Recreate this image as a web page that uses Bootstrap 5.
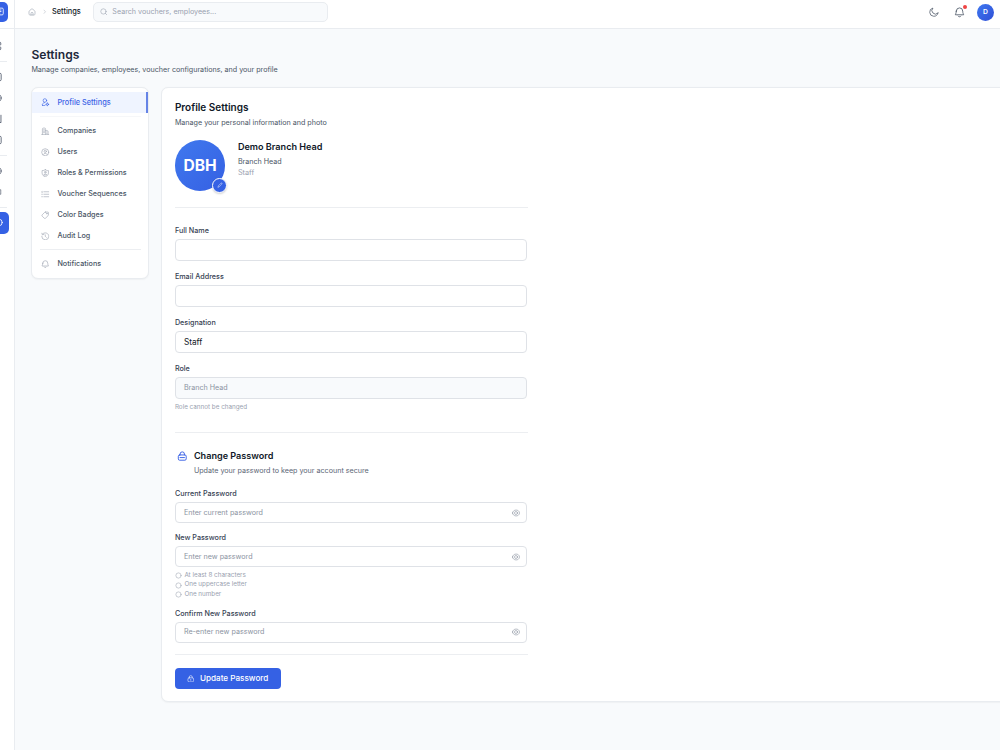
<!DOCTYPE html>
<html lang="en">
<head>
<meta charset="utf-8">
<meta name="viewport" content="width=device-width, initial-scale=1">
<title>Settings</title>
<link rel="stylesheet" href="https://cdn.jsdelivr.net/npm/bootstrap@5.3.0/dist/css/bootstrap.min.css">
<style>
body{font-family:Inter,"Liberation Sans",sans-serif;font-size:7.15px;line-height:10px;background:#f8fafc;color:#4a5565;height:750px;overflow:hidden}
svg{fill:none;stroke:currentColor;stroke-width:1.8;stroke-linecap:round;stroke-linejoin:round;flex:none;display:block}
.rail{width:15px;border-right:1px solid #e9ecf0;overflow:hidden;flex:none;color:#5b6475}
.rail svg{stroke-width:2.2}
.rail-item{height:21px;display:flex;align-items:center;margin-left:-8px}
.rail-logo,.rail-active{display:flex;align-items:center;justify-content:flex-end;background:#3561e4;color:#fff;border-radius:0 5px 5px 0}
.rail-logo{height:19.5px;width:7.5px;margin:2px 0 6.5px}
.rail-active{height:22px;width:9px;margin-top:3.5px;padding-right:6px}
.rail-line{height:1px;width:7px;background:#e9ecf0}
.topbar{height:28.5px;border-bottom:1px solid #e9ecf0;padding:0 6px 3.5px 12.5px;flex:none}
.searchbox{width:235.5px;height:19.5px;border:1px solid #e9ecf0;border-radius:5px;background:#f8fafc;color:#99a1af;padding-left:6px;gap:5px;margin-left:12px}
.topbar span{padding-top:.6px}
.muted{color:#99a1af}
.face{width:17px;height:17px;background:linear-gradient(135deg,#3f78f0,#2f4fd6);color:#fff;font-weight:600;font-size:6.8px}
.alert-dot{position:absolute;width:4px;height:4px;right:-2px;top:-1.5px;background:#ef4444}
.panel{background:#fff;border:1px solid #e9ecf0;border-radius:7px;box-shadow:0 .5px 1.5px rgba(0,0,0,.04)}
.title{font-size:12.1px;line-height:15px;font-weight:600;color:#1e293b}
.side{width:118px;height:191.5px;padding-top:4px;flex:none}
.side a{display:flex;align-items:center;height:21px;padding-left:9px;gap:7.5px;color:#4a5565;font-weight:550;text-decoration:none;font-size:7.2px}
.side a svg{color:#a0a7b4}
.side a.active{background:#eff4ff;border-right:2px solid #6583e6;color:#3b63e6;font-size:7.35px}
.side a.active svg{color:#3b63e6}
.side hr,.content hr{margin:0;border:0;height:1px;background:#eceef1;opacity:1}
.side hr{margin-left:8px;margin-right:7px}
.side hr.faint{background:#f6f7f9}
.main-panel{height:614.5px;width:900px;flex:none}
.content{width:365.5px;padding:12px 0 0 12.5px}
.ink{color:#101828}
.h-panel{font-size:10px;line-height:14px;font-weight:600;color:#101828}
.avatar{width:50.5px;height:50.5px;background:linear-gradient(135deg,#4079ee,#3560e3);color:#fff;font-weight:700;font-size:15.6px;position:relative}
.pen{position:absolute;right:-2px;bottom:-2px;width:15px;height:15px;background:#3561e4;border:1.3px solid #fff;box-shadow:0 1px 2px rgba(0,0,0,.18)}
.content label{display:block;font-weight:550;color:#364153;font-size:7.2px;line-height:10px;height:13px}
.group{height:46.1px}
.field{width:352.5px;height:22.5px;border:1px solid #dfe2e7;border-radius:4px;padding:0 6px 0 8px;background:#fff;display:flex;align-items:center;font-size:8.25px;color:#101828}
.field.off{background:#f8fafc;color:#8b93a1;font-size:7.15px}
.field.short{height:20.7px;font-size:7.15px;color:#8b93a1;justify-content:space-between}
.tiny{font-size:6.3px;line-height:9.4px;color:#99a1af}
.save{width:106px;height:21.5px;border-radius:4px;background:#3561e4;color:#fff;font-size:8.15px;font-weight:550;border:0;padding:0;gap:5px}
</style>
</head>
<body class="d-flex">
<svg width="0" height="0" class="position-absolute" aria-hidden="true"><defs>
<symbol id="home" viewBox="0 0 24 24"><path d="M3 11c0-1 .5-2 1.500-3L10 3.500c1-.8 3-.8 4 0L19.500 8c1 1 1.500 2 1.500 3v6c0 3-1 4-4 4H7c-3 0-4-1-4-4zM9 21v-5c0-2 1-3 3-3s3 1 3 3v5"/></symbol>
<symbol id="grid" viewBox="0 0 24 24"><rect x="3" y="3" width="7" height="7" rx="2"/><rect x="14" y="3" width="7" height="7" rx="2"/><rect x="3" y="14" width="7" height="7" rx="2"/><rect x="14" y="14" width="7" height="7" rx="2"/></symbol>
<symbol id="doc" viewBox="0 0 24 24"><rect x="4" y="3" width="18" height="18" rx="3"/><path d="M8 8h8M8 12h8M8 16h5"/></symbol>
<symbol id="ring" viewBox="0 0 24 24"><circle cx="13" cy="12" r="9"/></symbol>
<symbol id="down" viewBox="0 0 24 24"><path d="M21.500 3v17M17 17l4 4"/></symbol>
<symbol id="usercog" viewBox="0 0 24 24"><circle cx="11" cy="7" r="5"/><path d="M4 21c-2-3 1-7 6-8M4 21h7"/><circle cx="18" cy="18" r="3"/><path d="M18 13.500v1M18 21.500v1M13.500 18h1M21.500 18h1"/></symbol>
<symbol id="building" viewBox="0 0 24 24"><path d="M2 21.500h20M4 21V6c0-2 1-3 3-3h3c2 0 3 1 3 3v15M13 10h3c3 0 4 1 4 4v7M7 8h3M7 12h3M7 16h3M16 14h1M16 18h1"/></symbol>
<symbol id="user" viewBox="0 0 24 24"><circle cx="12" cy="12" r="10"/><circle cx="12" cy="9.500" r="3.200"/><path d="M6.500 18c2-4 9-4 11 0"/></symbol>
<symbol id="shield" viewBox="0 0 24 24"><path d="M12 2c-3 2-5 2.500-9 2.500V11c0 6 4 9 9 11 5-2 9-5 9-11V4.500C17 4.500 15 4 12 2z"/><circle cx="12" cy="9" r="2.300"/><path d="M8 16c1-3 7-3 8 0z"/></symbol>
<symbol id="list" viewBox="0 0 24 24"><path d="M8 5h14M8 12h14M8 19h14M2 5l1.500-1v3M2 12h2M2 19h2"/></symbol>
<symbol id="tag" viewBox="0 0 24 24"><path d="M13 3h6c1.500 0 2 .5 2 2v6c0 1-.3 1.500-1 2.200l-7 7c-1.300 1.300-2.700 1.300-4 0l-5.500-5.500c-1.300-1.300-1.300-2.700 0-4l7-7C11.500 3.200 12 3 13 3z"/><circle cx="16.500" cy="7.500" r="1"/></symbol>
<symbol id="history" viewBox="0 0 24 24"><path d="M5 5c7-6 17-1 17 7a10 10 0 0 1-20 0M2.500 3.500L4 8l4.500-1.500M12 8v4l3 3"/></symbol>
<symbol id="bell" viewBox="0 0 24 24"><path d="M5 9a7 7 0 0 1 14 0c0 5 2 6 2 8H3c0-2 2-3 2-8zM9 20c1 2 5 2 6 0"/></symbol>
<symbol id="moon" viewBox="0 0 24 24"><path d="M21.500 14.500A10 10 0 1 1 9.500 2.500a8 8 0 0 0 12 12z"/></symbol>
<symbol id="search" viewBox="0 0 24 24"><circle cx="11" cy="11" r="8.500"/><path d="M17 17l5 5"/></symbol>
<symbol id="chev" viewBox="0 0 24 24"><path d="M9 5l6 7-6 7"/></symbol>
<symbol id="pen" viewBox="0 0 24 24"><path d="M4 20l1.500-5L16 4.500c1-1 2.500-1 3.500 0s1 2.500 0 3.500L9 18.500z"/></symbol>
<symbol id="lock" viewBox="0 0 24 24"><path d="M7 9V7a5 5 0 0 1 10 0v2"/><rect x="3" y="9" width="18" height="12" rx="3"/><path d="M7 15h10"/></symbol>
<symbol id="padlock" viewBox="0 0 24 24"><path d="M7 9V7a5 5 0 0 1 10 0v2"/><rect x="3" y="9" width="18" height="13" rx="4"/><path d="M12 14v3"/></symbol>
<symbol id="eye" viewBox="0 0 24 24"><path d="M1.500 12C2.500 0 21.500 0 22.500 12 21.500 24 2.500 24 1.500 12z"/><circle cx="12" cy="12" r="4.500"/></symbol>
<symbol id="unmet" viewBox="0 0 24 24"><circle cx="12" cy="12" r="9"/></symbol>
</defs></svg>

<aside class="rail bg-white">
 <div class="rail-logo overflow-hidden"><svg width="9" height="9" style="margin-right:4px"><use href="#doc"/></svg></div>
 <div class="rail-line w-100"></div>
 <div class="rail-item" style="margin-top:6px"><svg width="10" height="10"><use href="#grid"/></svg></div>
 <div class="rail-line" style="margin:5px 0 4px"></div>
 <div class="rail-item"><svg width="10" height="10"><use href="#doc"/></svg></div>
 <div class="rail-item"><svg width="10" height="10"><use href="#ring"/></svg></div>
 <div class="rail-item"><svg width="10" height="10"><use href="#down"/></svg></div>
 <div class="rail-item"><svg width="10" height="10"><use href="#doc"/></svg></div>
 <div class="rail-line" style="margin:5px 0 4px"></div>
 <div class="rail-item"><svg width="10" height="10"><use href="#ring"/></svg></div>
 <div class="rail-item"><svg width="10" height="6" preserveAspectRatio="none" viewBox="0 0 24 24"><path d="M4 3h17v18H4z"/></svg></div>
 <div class="rail-line" style="margin-top:5px"></div>
 <div class="rail-active overflow-hidden"><svg width="9" height="9"><use href="#ring"/></svg></div>
</aside>

<div class="flex-grow-1 d-flex flex-column overflow-hidden">
 <header class="topbar bg-white d-flex align-items-center">
  <svg width="8" height="8" class="muted"><use href="#home"/></svg>
  <svg width="5.5" height="5.5" class="muted" style="margin:0 5px 0 6px"><use href="#chev"/></svg>
  <span class="ink fw-medium" style="font-size:7.4px">Settings</span>
  <div class="searchbox d-flex align-items-center"><svg width="7.5" height="7.5"><use href="#search"/></svg><span>Search vouchers, employees...</span></div>
  <div class="ms-auto d-flex align-items-center">
   <svg width="10" height="10" style="margin-right:15px"><use href="#moon"/></svg>
   <div class="position-relative" style="margin-right:12.5px"><svg width="11" height="11"><use href="#bell"/></svg><i class="alert-dot rounded-circle"></i></div>
   <span class="face rounded-circle d-flex align-items-center justify-content-center">D</span>
  </div>
 </header>
 <main style="padding:18px 0 0 16.4px">
  <h1 class="title mb-0">Settings</h1>
  <div style="margin-top:3px;height:22.5px">Manage companies, employees, voucher configurations, and your profile</div>
  <div class="d-flex" style="gap:12px">
   <nav class="panel side">
    <a class="active" href="#"><svg width="8.5" height="8.5"><use href="#usercog"/></svg>Profile Settings</a>
    <hr class="faint" style="margin-top:3px;margin-bottom:3.5px">
    <a href="#"><svg width="8.5" height="8.5"><use href="#building"/></svg>Companies</a>
    <a href="#"><svg width="8.5" height="8.5"><use href="#user"/></svg>Users</a>
    <a href="#"><svg width="8.5" height="8.5"><use href="#shield"/></svg>Roles &amp; Permissions</a>
    <a href="#"><svg width="8.5" height="8.5"><use href="#list"/></svg>Voucher Sequences</a>
    <a href="#"><svg width="8.5" height="8.5"><use href="#tag"/></svg>Color Badges</a>
    <a href="#"><svg width="8.5" height="8.5"><use href="#history"/></svg>Audit Log</a>
    <hr style="margin-top:2.5px;margin-bottom:3.5px">
    <a href="#"><svg width="8.5" height="8.5"><use href="#bell"/></svg>Notifications</a>
   </nav>
   <section class="panel main-panel">
    <div class="content">
     <h2 class="h-panel mb-0">Profile Settings</h2>
     <div style="margin-top:3.5px">Manage your personal information and photo</div>
     <div class="d-flex" style="margin-top:12.5px;gap:12.5px">
      <div class="avatar rounded-circle d-flex align-items-center justify-content-center"><span style="padding-top:1.5px">DBH</span><span class="pen rounded-circle d-flex align-items-center justify-content-center"><svg width="6" height="6"><use href="#pen"/></svg></span></div>
      <div><div class="ink" style="font-size:9.1px;font-weight:600;line-height:14px">Demo Branch Head</div><div style="margin-top:2.5px">Branch Head</div><div class="muted" style="font-size:7.3px;margin-top:1.5px">Staff</div></div>
     </div>
     <hr style="margin:16.5px 0 17.5px">
     <div class="group"><label>Full Name</label><div class="field"></div></div>
     <div class="group"><label>Email Address</label><div class="field"></div></div>
     <div class="group"><label>Designation</label><div class="field">Staff</div></div>
     <div class="group" style="height:35.5px"><label>Role</label><div class="field off">Branch Head</div></div>
     <div class="tiny" style="margin-top:3.6px">Role cannot be changed</div>
     <hr style="margin:19.5px 0 16.5px">
     <div class="d-flex" style="padding-left:2px;gap:6.5px">
      <svg width="10.5" height="10.5" style="color:#3b63e6;stroke-width:2.2;margin-top:2px"><use href="#lock"/></svg>
      <div><div class="ink" style="font-size:9.1px;font-weight:600;line-height:14px">Change Password</div><div style="margin-top:3px;color:#5b6575">Update your password to keep your account secure</div></div>
     </div>
     <div style="margin-top:13px;height:44px"><label>Current Password</label><div class="field short">Enter current password<svg width="8" height="8"><use href="#eye"/></svg></div></div>
     <label>New Password</label><div class="field short">Enter new password<svg width="8" height="8"><use href="#eye"/></svg></div>
     <div class="tiny" style="margin-top:4px;height:38px">
      <div class="d-flex align-items-center" style="gap:2.5px"><svg width="7" height="7"><use href="#unmet"/></svg>At least 8 characters</div>
      <div class="d-flex align-items-center" style="gap:2.5px"><svg width="7" height="7"><use href="#unmet"/></svg>One uppercase letter</div>
      <div class="d-flex align-items-center" style="gap:2.5px"><svg width="7" height="7"><use href="#unmet"/></svg>One number</div>
     </div>
     <label>Confirm New Password</label><div class="field short">Re-enter new password<svg width="8" height="8"><use href="#eye"/></svg></div>
     <hr style="margin:11.5px 0 12.5px">
     <button class="save d-flex align-items-center justify-content-center"><svg width="7.5" height="7.5"><use href="#padlock"/></svg>Update Password</button>
    </div>
   </section>
  </div>
 </main>
</div>
<script src="https://cdn.jsdelivr.net/npm/bootstrap@5.3.0/dist/js/bootstrap.bundle.min.js"></script>
</body>
</html>
